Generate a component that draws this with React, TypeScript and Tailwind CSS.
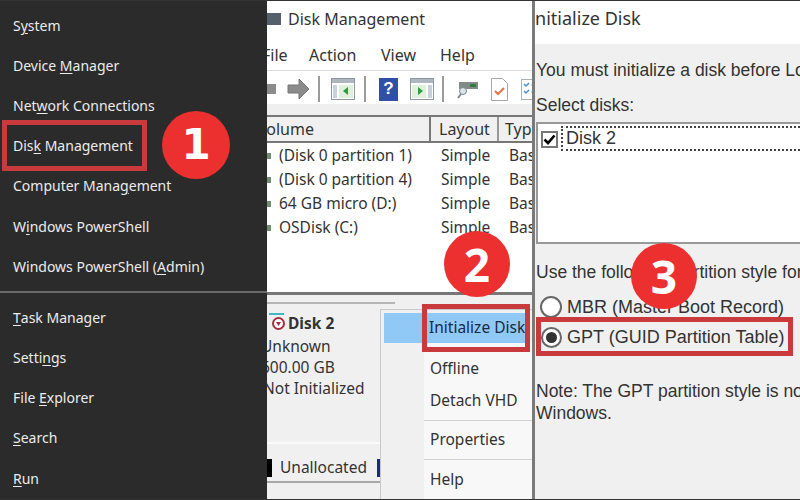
import React from "react";

const U = ({ children }: { children: React.ReactNode }) => <span className="underline underline-offset-2">{children}</span>;

const Row = ({ children }: { children: React.ReactNode }) => (
  <div className="h-[40.2px] flex items-center pl-[13px] text-[14px] text-[#ececec] whitespace-pre">{children}</div>
);

const Badge = ({ n, className }: { n: string; className: string }) => (
  <div className={"absolute rounded-full bg-[#ec302f] flex items-center justify-center text-white font-bold leading-none " + className}>{n}</div>
);

const Frame = ({ className }: { className: string }) => (
  <div className={"absolute border-[5px] border-[#c93a3c] " + className} />
);

const Sep = ({ className }: { className: string }) => <div className={"w-[2px] h-[26px] bg-[#9a9a9a] shrink-0 " + className} />;

const WinIcon = ({ flip }: { flip?: boolean }) => (
  <svg width="24" height="22" viewBox="0 0 24 22" className="block">
    <rect x="0.5" y="0.5" width="23" height="21" fill="#fff" stroke="#8d98a3" />
    <rect x="1" y="1" width="22" height="4" fill="#aeb6bf" />
    <rect x={flip ? 18 : 2} y="7" width="4" height="13" fill="#c9d2da" />
    <rect x={flip ? 2 : 8} y="7" width={14} height="13" fill="#dff0dc" />
    <path d={flip ? "M8 9l5 4-5 4z" : "M17 9l-5 4 5 4z"} fill="#2f9d3f" />
  </svg>
);

const Toolbar = () => (
  <div className="h-[33px] pt-[3px] flex items-center bg-white shrink-0">
    <div className="w-[9px] h-[10px] bg-[#8b8b8b] shrink-0" />
    <svg width="23" height="22" viewBox="0 0 23 22" className="shrink-0 ml-[11px]">
      <path d="M1 7h11V1l10 10-10 10v-6H1z" fill="#8b8b8b" stroke="#777" />
    </svg>
    <Sep className="ml-[8px]" />
    <div className="ml-[11px]"><WinIcon /></div>
    <Sep className="ml-[9px]" />
    <div className="ml-[13px] w-[19px] h-[23px] bg-[#2f4fa8] flex items-center justify-center text-white text-[17px] font-bold font-['Liberation_Sans'] shrink-0">?</div>
    <div className="ml-[12px]"><WinIcon flip /></div>
    <Sep className="ml-[8px]" />
    <svg width="21" height="20" viewBox="0 0 21 20" className="ml-[13px] shrink-0">
      <rect x="2" y="3" width="19" height="7" fill="#7f8c86" />
      <rect x="13" y="5" width="6" height="3" fill="#2f7d3d" />
      <circle cx="6" cy="12" r="3.5" fill="#d9e3e8" stroke="#808890" />
      <path d="M4 15L1 19" stroke="#808890" strokeWidth="2" />
    </svg>
    <svg width="17" height="23" viewBox="0 0 17 23" className="ml-[13px] shrink-0">
      <path d="M.5.5h11l5 5v17H.5z" fill="#fff" stroke="#a8a8a8" />
      <path d="M4 13l3 3 6-6" fill="none" stroke="#e0744a" strokeWidth="2" />
    </svg>
    <svg width="20" height="21" viewBox="0 0 20 21" className="ml-[13px] shrink-0">
      <rect x=".5" y=".5" width="19" height="20" fill="#fff" stroke="#a8b0b8" />
      <path d="M3 5l2 2 3-3M3 12l2 2 3-3" fill="none" stroke="#4a90c8" strokeWidth="1.5" />
      <path d="M10 6h8M10 13h8" stroke="#a8b0b8" />
    </svg>
  </div>
);

const VolRow = ({ name }: { name: string }) => (
  <div className="h-[24px] flex items-center text-[15.5px] text-[#333] whitespace-nowrap">
    <div className="w-[4px] h-[6px] bg-[#6f8f70] shrink-0" />
    <div className="ml-[8px] w-[162px] shrink-0">{name}</div>
    <div className="w-[68px] shrink-0">Simple</div>
    <div>Bas</div>
  </div>
);

export default function App() {
  return (
    <div className="relative w-[800px] h-[500px] flex overflow-hidden bg-white">
      {/* Left: Win+X menu */}
      <div className="w-[267px] h-full bg-[#2b2b2b] shrink-0 pt-[5px] font-['Noto_Sans']">
        <Row>S<U>y</U>stem</Row>
        <Row>Device <U>M</U>anager</Row>
        <Row>Net<U>w</U>ork Connections</Row>
        <Row>Dis<U>k</U> Management</Row>
        <Row>Computer Mana<U>g</U>ement</Row>
        <Row>W<U>i</U>ndows PowerShell</Row>
        <Row>Windows PowerShell (<U>A</U>dmin)</Row>
        <div className="h-[2px] mt-[5px] mb-[4px] bg-[#6a6a6a]" />
        <Row><U>T</U>ask Manager</Row>
        <Row>Setti<U>n</U>gs</Row>
        <Row>File <U>E</U>xplorer</Row>
        <Row><U>S</U>earch</Row>
        <Row><U>R</U>un</Row>
      </div>

      {/* Middle: Disk Management */}
      <div className="w-[265px] h-full shrink-0 flex flex-col overflow-hidden bg-white font-['Noto_Sans'] text-[#333]">
        <div className="h-[37px] flex items-center shrink-0">
          <div className="w-[14px] h-[12px] bg-[#55606a] shrink-0" />
          <div className="ml-[7px] text-[16px] whitespace-nowrap">Disk Management</div>
        </div>
        <div className="h-[34px] pt-[3px] flex items-center text-[16px] shrink-0 border-b border-[#dcdcdc]">
          <div className="w-[42px] -ml-[5px] shrink-0">File</div>
          <div className="w-[72px] ml-[5px] shrink-0">Action</div>
          <div className="w-[59px] shrink-0">View</div>
          <div>Help</div>
        </div>
        <Toolbar />
        <div className="h-[11px] bg-[#efefef] shrink-0" />
        <div className="h-[28px] bg-[#f0f0f0] border-y-2 border-[#777] flex items-center text-[16px] shrink-0 whitespace-nowrap">
          <div className="w-[174px] h-full -ml-[10px] shrink-0 border-r-2 border-[#777] flex items-center">Volume</div>
          <div className="w-[68px] h-full pl-[8px] shrink-0 border-r-2 border-[#999] flex items-center">Layout</div>
          <div className="pl-[6px]">Type</div>
        </div>
        <div className="h-[149px] shrink-0 pt-[1px] bg-white">
          <VolRow name="(Disk 0 partition 1)" />
          <VolRow name="(Disk 0 partition 4)" />
          <VolRow name="64 GB micro (D:)" />
          <VolRow name="OSDisk (C:)" />
        </div>
        <div className="h-[3px] bg-[#777] shrink-0" />
        <div className="flex-1 flex bg-[#f0f0f0] min-h-0">
          <div className="w-[113px] shrink-0 flex flex-col whitespace-nowrap text-[15.5px]">
            <div className="h-[2px] mt-[7px] w-[128px] bg-[#b5b5b5] shrink-0" />
            <div className="mt-[8px] h-[23px] flex items-center font-bold shrink-0">
              <span className="relative ml-[5px] mr-[3px] shrink-0 flex">
                <span className="absolute -top-[4px] -left-[3px] w-[15px] h-[2px] bg-[#3fb8c4]" />
                <svg width="13" height="13" viewBox="0 0 13 13">
                  <circle cx="6.5" cy="6.5" r="5.5" fill="#fff" stroke="#a3303f" strokeWidth="2" />
                  <path d="M4 5h5L6.5 9z" fill="#a3303f" />
                </svg>
              </span>
              Disk 2
            </div>
            <div className="h-[21px] mt-[1px] flex items-center -ml-[6px] shrink-0">Unknown</div>
            <div className="h-[21px] flex items-center -ml-[6px] shrink-0">600.00 GB</div>
            <div className="h-[21px] flex items-center -ml-[4px] shrink-0">Not Initialized</div>
            <div className="mt-[43px] h-[2px] bg-[#fafafa] shrink-0" />
            <div className="mt-[12px] h-[24px] flex items-center shrink-0">
              <div className="w-[5px] h-[18px] bg-black shrink-0" />
              <div className="ml-[8px] w-[97px] shrink-0">Unallocated</div>
              <div className="w-[3px] h-[18px] bg-[#1b2a80] shrink-0" />
            </div>
            <div className="mt-[1px] h-[2px] bg-[#a8a8a8] shrink-0" />
          </div>
          <div className="flex-1 mt-[14px] border-l border-t border-[#c8c8c8] flex flex-col text-[15.5px] bg-[#f0f0f0] whitespace-nowrap min-w-0">
            <div className="mt-[3px] ml-[3px] mr-[4px] h-[30px] bg-[#90c8f6] flex items-center pl-[45px] text-[#1a2a44] shrink-0">Initialize Disk</div>
            <div className="flex-1 ml-[43px] flex flex-col bg-[#f8f8f8] pt-[10px] min-h-0">
              <div className="h-[32px] flex items-center pl-[6px] shrink-0">Offline</div>
              <div className="h-[32px] flex items-center pl-[6px] shrink-0">Detach VHD</div>
              <div className="h-[1px] bg-[#d0d0d0] mt-[3px] shrink-0" />
              <div className="h-[38px] flex items-center pl-[6px] shrink-0">Properties</div>
              <div className="h-[1px] bg-[#d0d0d0] shrink-0" />
              <div className="h-[38px] pt-[2px] flex items-center pl-[6px] shrink-0">Help</div>
            </div>
          </div>
        </div>
      </div>

      {/* Divider */}
      <div className="w-[3px] h-full bg-[#7a7a7a] shrink-0" />

      {/* Right: Initialize Disk */}
      <div className="flex-1 h-full flex flex-col overflow-hidden bg-[#f0f0f0] font-['Liberation_Sans'] text-[#333] whitespace-nowrap">
        <div className="h-[44px] bg-white flex items-center shrink-0 text-[18px] font-['Noto_Sans'] -ml-[6px] pb-[8px]">Initialize Disk</div>
        <div className="mt-[17px] h-[18px] flex items-center pl-[1px] text-[17.5px] shrink-0">You must initialize a disk before Logical</div>
        <div className="mt-[17px] h-[18px] flex items-center pl-[1px] text-[17.5px] shrink-0">Select disks:</div>
        <div className="mt-[8px] ml-[1px] h-[122px] bg-white border-2 border-[#999] border-r-0 flex items-start pl-[3px] pt-[2px] shrink-0">
          <div className="mt-[5px] w-[17px] h-[17px] border-2 border-[#777] bg-white flex items-center justify-center shrink-0">
            <svg width="13" height="11" viewBox="0 0 13 11"><path d="M1.5 5.5L5 9l6.5-7.5" fill="none" stroke="#000" strokeWidth="2.6" /></svg>
          </div>
          <div className="ml-[3px] flex-1 h-[25px] border-2 border-dotted border-[#444] border-r-0 flex items-center pl-[3px] text-[18px]">Disk 2</div>
        </div>
        <div className="mt-[19px] h-[18px] flex items-center pl-[1px] text-[17.5px] shrink-0">Use the following partition style for</div>
        <div className="mt-[15px] h-[22px] flex items-center pl-[5px] text-[18px] shrink-0">
          <div className="w-[22px] h-[22px] rounded-full border-2 border-[#666] bg-white shrink-0" />
          <div className="ml-[5px]">MBR (Master Boot Record)</div>
        </div>
        <div className="mt-[8px] h-[22px] flex items-center pl-[6px] text-[18px] shrink-0">
          <div className="w-[21px] h-[21px] rounded-full border-2 border-[#666] bg-white flex items-center justify-center shrink-0">
            <div className="w-[11px] h-[11px] rounded-full bg-[#333]" />
          </div>
          <div className="ml-[5px]">GPT (GUID Partition Table)</div>
        </div>
        <div className="mt-[33px] h-[20px] flex items-center pl-[1px] text-[17.5px] shrink-0">Note: The GPT partition style is not</div>
        <div className="mt-[2px] h-[20px] flex items-center pl-[1px] text-[17.5px] shrink-0">Windows.</div>
      </div>

      {/* Annotations over the composite */}
      <Frame className="left-[2px] top-[120px] w-[145px] h-[51px]" />
      <Frame className="left-[422px] top-[304px] w-[108px] h-[48px]" />
      <Frame className="left-[536px] top-[317px] w-[257px] h-[39px]" />
      <Badge n="1" className="left-[162px] top-[111px] w-[68px] h-[68px] text-[42px] font-['DejaVu_Sans']" />
      <Badge n="2" className="left-[444px] top-[231px] w-[66px] h-[66px] text-[46px] font-['Open_Sans']" />
      <Badge n="3" className="left-[631px] top-[243px] w-[66px] h-[66px] text-[46px] font-['Open_Sans']" />
      <div className="absolute left-0 right-0 top-0 h-[1px] bg-[#333]" />
      <div className="absolute left-0 right-0 bottom-0 h-[1px] bg-[#333]" />
    </div>
  );
}
